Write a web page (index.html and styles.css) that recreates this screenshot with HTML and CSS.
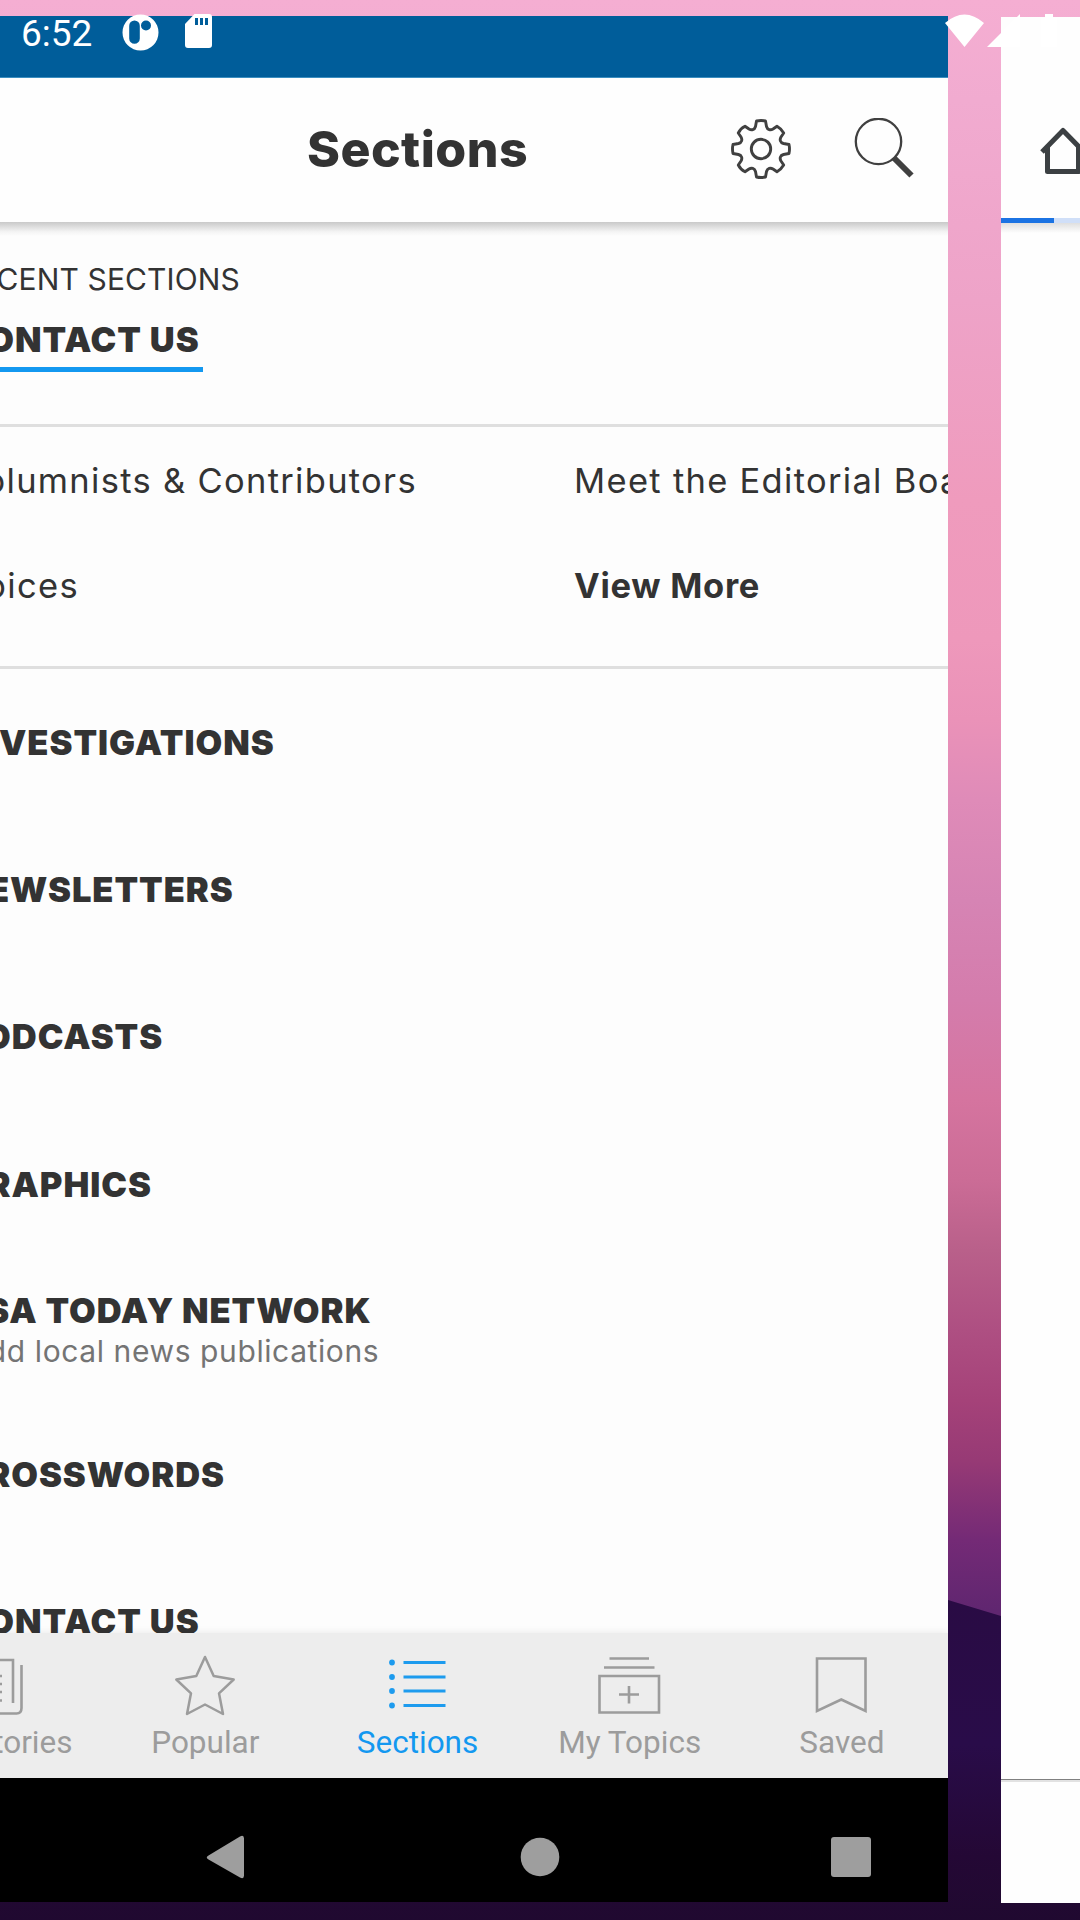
FILE: index.html
```html
<!DOCTYPE html>
<html lang="en">
<head>
<meta charset="utf-8">
<title>Sections</title>
<link rel="stylesheet" href="styles.css">
</head>
<body>
<div class="screen">
  <svg class="hill" width="1080" height="320" viewBox="0 0 1080 320"><path d="M0 0H948L1001 16L1080 38V320H0Z" fill="url(#hillFill)"/><defs><linearGradient id="hillFill" x1="0" y1="0" x2="0" y2="1"><stop offset="0" stop-color="#290b44"/><stop offset=".45" stop-color="#290c49"/><stop offset=".8" stop-color="#240835"/><stop offset="1" stop-color="#200930"/></linearGradient></defs></svg>

  <div class="cards">
    <main class="card app">
      <div class="status-strip"></div>
      <header class="toolbar">
        <h1 class="title">Sections</h1>
        <div class="tools">
          <svg width="62" height="62" viewBox="0 0 62 62" fill="none" stroke="#404040" stroke-width="2.9" stroke-linejoin="round"><circle cx="31" cy="31" r="9.700"/><path d="M26.500 3Q31 2 35.500 3L36.500 8.500C37.500 12 40.500 12.500 43 11L47 8.300Q51 10.500 53.700 15L51 19C49.500 21.500 50 24.500 53.500 25.500L59 26.500Q60 31 59 35.500L53.500 36.500C50 37.500 49.500 40.500 51 43L53.700 47Q51 51.500 47 53.700L43 51C40.500 49.500 37.500 50 36.500 53.500L35.500 59Q31 60 26.500 59L25.500 53.500C24.500 50 21.500 49.500 19 51L15 53.700Q10.500 51.500 8.300 47L11 43C12.500 40.500 12 37.500 8.500 36.500L3 35.500Q2 31 3 26.500L8.500 25.500C12 24.500 12.500 21.500 11 19L8.300 15Q10.500 10.500 15 8.300L19 11C21.500 12.500 24.500 12 25.500 8.500Z"/></svg>
          <svg width="62" height="62" viewBox="0 0 62 62" fill="none" stroke="#404040"><circle cx="26.500" cy="23.500" r="22.700" stroke-width="2.300"/><path d="M42 40L59.500 57.500" stroke-width="6"/></svg>
        </div>
      </header>

      <section class="recent">
        <p class="recent-label">RECENT SECTIONS</p>
        <a class="recent-link"><span class="heading">CONTACT US</span></a>
      </section>

      <section class="topics">
        <span>Columnists &amp; Contributors</span>
        <span>Meet the Editorial Board</span>
        <span class="topic-voices">Voices</span>
        <b class="topic-more">View More</b>
      </section>

      <ul class="list">
        <li><span class="heading">INVESTIGATIONS</span></li>
        <li><span class="heading">NEWSLETTERS</span></li>
        <li><span class="heading">PODCASTS</span></li>
        <li><span class="heading">GRAPHICS</span></li>
        <li class="two-line"><span class="heading">USA TODAY NETWORK</span><span class="sub">Add local news publications</span></li>
        <li><span class="heading">CROSSWORDS</span></li>
        <li><span class="heading">CONTACT US</span></li>
      </ul>

      <nav class="tabs">
        <a class="tab"><svg width="64" height="64" viewBox="0 0 64 64" fill="none" stroke="#9c9c9c" stroke-width="2.6"><path d="M52 49V6H4V54Q4 59.500 10 59.500H55.500Q60.500 59.500 60.500 54V11M12 22H41M12 30H41M12 38H41M12 46.500H41"/></svg>Top Stories</a>
        <a class="tab"><svg width="64" height="64" viewBox="0 0 64 64" fill="none" stroke="#9c9c9c" stroke-width="2.500" stroke-linejoin="round"><path d="M32 3L40.700 22L60.700 25.500L46 39.300L50 60L32 50.500L14 60L18 39.300L3.300 25.500L23.300 22Z"/></svg>Popular</a>
        <a class="tab active"><svg width="64" height="64" viewBox="0 0 64 64" stroke="#1d9bee" stroke-width="2.800"><path d="M17.500 8.500H59.500M17.500 23H59.500M17.500 37H59.500M17.500 51.500H59.500"/><g fill="#1d9bee" stroke="none"><circle cx="6" cy="8.500" r="2.900"/><circle cx="6" cy="23" r="2.900"/><circle cx="6" cy="37" r="2.900"/><circle cx="6" cy="51.500" r="2.900"/></g></svg>Sections</a>
        <a class="tab"><svg width="64" height="64" viewBox="0 0 64 64" fill="none" stroke="#9c9c9c" stroke-width="2.6"><path d="M11.500 4.500H51M6 13.500H56.500M1.500 22H61V58.500H1.500ZM21 40.500H41M31 32V49.500"/></svg>My Topics</a>
        <a class="tab"><svg width="64" height="64" viewBox="0 0 64 64" fill="none" stroke="#9c9c9c" stroke-width="2.6"><path d="M7 4.500H55.500V57L31.300 45.500L7 57Z"/></svg>Saved</a>
      </nav>
      <div class="nav-strip"></div>
    </main>

    <aside class="card browser">
      <div class="browser-bar"><svg width="50" height="50" viewBox="0 0 50 50" fill="none" stroke="#3c4043" stroke-width="5" stroke-linejoin="round"><path d="M2 26L23 4.500L44 26M7.500 21V45.500H38.500V21"/></svg></div>
      <div class="progress"><div class="progress-fill"></div></div>
      <div class="browser-page"></div>
      <div class="browser-foot"></div>
    </aside>
  </div>

  <div class="status">
    <span class="clock">6:52</span>
    <svg width="37" height="37" viewBox="0 0 37 37"><path fill="#fff" fill-rule="evenodd" d="M18.500 .5A18 18 0 1 1 18.500 36.500A18 18 0 1 1 18.500 .5ZM12.500 6.500A5.300 5.300 0 0 0 7.200 12V24.500A5.300 5.300 0 0 0 17.800 24.500V12A5.300 5.300 0 0 0 12.500 6.500ZM24 6.500A5 5 0 1 0 24 16.500A5 5 0 1 0 24 6.500Z"/></svg>
    <svg class="status-sd" width="27" height="34" viewBox="0 0 27 34"><path fill="#fff" fill-rule="evenodd" d="M9.500 0H24Q27 0 27 3V31Q27 34 24 34H3Q0 34 0 31V10ZM10 4V11H13V4ZM15 4V11H18V4ZM20 4V11H23V4Z"/></svg>
    <svg class="status-signal" width="120" height="36" viewBox="0 0 120 36" fill="#fff"><path d="M0 9Q19.500-8 39 9L19.500 33ZM42 33L75 0V33ZM100 0H108V4H112V33H96V4H100Z"/></svg>
  </div>

  <svg class="sys-nav" width="680" height="46" viewBox="0 0 680 46" fill="#9e9e9e"><path d="M6.500 21.500L38 2.500Q42 .5 42 4.500V41.500Q42 45.500 38 43.500L6.500 25.500Q3 23.500 6.500 21.500Z"/><circle cx="338" cy="23" r="19.300"/><rect x="629" y="3" width="40" height="40" rx="3"/></svg>
</div>
</body>
</html>
```
FILE: styles.css
```css
* { box-sizing: border-box; }
body, h1, p, ul { margin: 0; padding: 0; }
body { font-family: Inter, sans-serif; color: #333; }

.screen {
  position: relative;
  width: 1080px;
  height: 1920px;
  overflow: hidden;
  padding-top: 16px;
  background: linear-gradient(#f5aed2 0, #f1abd0 100px, #eea3c8 300px, #ef9bbd 500px, #ee98bb 640px, #ea92b8 720px, #df8bb8 800px, #d684b4 900px, #d47cac 1000px, #d5749f 1100px, #cb6c96 1180px, #b9608a 1250px, #ae4f82 1330px, #a54279 1400px, #973a75 1460px, #742a76 1540px, #602670 1610px);
}
.hill { position: absolute; left: 0; top: 1600px; }

.cards { position: relative; display: flex; gap: 53px; width: 1200px; margin-left: -113px; }
.card { display: flex; flex-direction: column; flex: none; height: 1886px; overflow: hidden; background: #fdfdfd; }

.app { width: 1061px; }
.status-strip { height: 62px; flex: none; background: #005d9a; border-bottom: 1px solid #3b8ec0; }
.toolbar {
  position: relative;
  flex: none;
  height: 144px;
  display: grid;
  grid-template-columns: 1fr auto 1fr;
  align-items: center;
  padding-bottom: 3px;
  background: #fefefe;
}
.toolbar::after,
.progress::after {
  content: "";
  position: absolute;
  left: 0;
  right: 0;
  top: 100%;
  height: 14px;
  background: linear-gradient(#c9c9c9, #dedede 35%, #f4f4f4 70%, #fdfdfd);
}
.title { grid-column: 2; font-size: 50px; font-weight: 800; line-height: 60px; letter-spacing: .45px; }
.tools { display: flex; justify-content: flex-end; gap: 60px; padding-right: 34px; }

.heading { font-size: 34.500px; font-weight: 900; line-height: 42px; letter-spacing: .95px; white-space: nowrap; }
.recent { flex: none; height: 205px; padding: 36px 0 0 72px; border-bottom: 3px solid #dfdfdf; }
.recent-label { font-size: 30px; line-height: 42px; letter-spacing: .12px; }
.recent-link { display: inline-block; height: 54px; margin-top: 18px; padding: 1px 3px 0 1.500px; border-bottom: 5px solid #1398f0; }

.topics {
  flex: none;
  height: 242px;
  display: grid;
  grid-template-columns: 616px 1fr;
  grid-template-rows: 105px 105px;
  padding: 1px 0 0 71px;
  font-size: 34.500px;
  line-height: 105px;
  letter-spacing: 1.300px;
  white-space: nowrap;
  border-bottom: 3px solid #dfdfdf;
}
.topic-voices { padding-left: 4px; }
.topic-more { letter-spacing: .7px; }

.list { flex: 1; min-height: 0; overflow: hidden; list-style: none; padding-left: 73.500px; }
.list li { height: 147.300px; display: flex; flex-direction: column; justify-content: center; }
.list .two-line { height: 143px; }
.sub { padding-left: 6px; font-size: 30px; line-height: 38px; letter-spacing: .6px; color: #747474; white-space: nowrap; }

.tabs { position: relative; flex: none; height: 145px; display: flex; background: #ededed; box-shadow: 0 -2px 6px rgba(0, 0, 0, .06); }
.tab { flex: 1; display: flex; flex-direction: column; align-items: center; gap: 2px; padding-top: 21px; font: 31.500px/46px Roboto, sans-serif; color: #9c9c9c; }
.active { color: #1398f0; }
.nav-strip { flex: none; height: 124px; background: #000; }

.browser { width: 112px; margin-top: 1px; background: #fefefe; }
.browser-bar { height: 201px; padding: 109px 0 0 39px; }
.progress { position: relative; height: 5px; flex: none; background: #d0dff8; }
.progress::after { height: 10px; background: linear-gradient(#dfdfdf, #fefefe); }
.progress-fill { width: 53px; height: 5px; background: #1b73e3; }
.browser-page { flex: 1; }
.browser-foot { height: 124px; border-top: 1px solid #808080; box-shadow: inset 0 2px #e2e2e2; }

.status { position: absolute; inset: 0 0 auto 0; height: 62px; display: flex; align-items: flex-start; padding: 14px 15px 0 21px; color: #fff; }
.clock { width: 101px; font: 37px/40px Roboto, sans-serif; }
.status-sd { margin-left: 26px; }
.status-signal { margin-left: auto; }
.sys-nav { position: absolute; left: 202px; top: 1834px; }
```
